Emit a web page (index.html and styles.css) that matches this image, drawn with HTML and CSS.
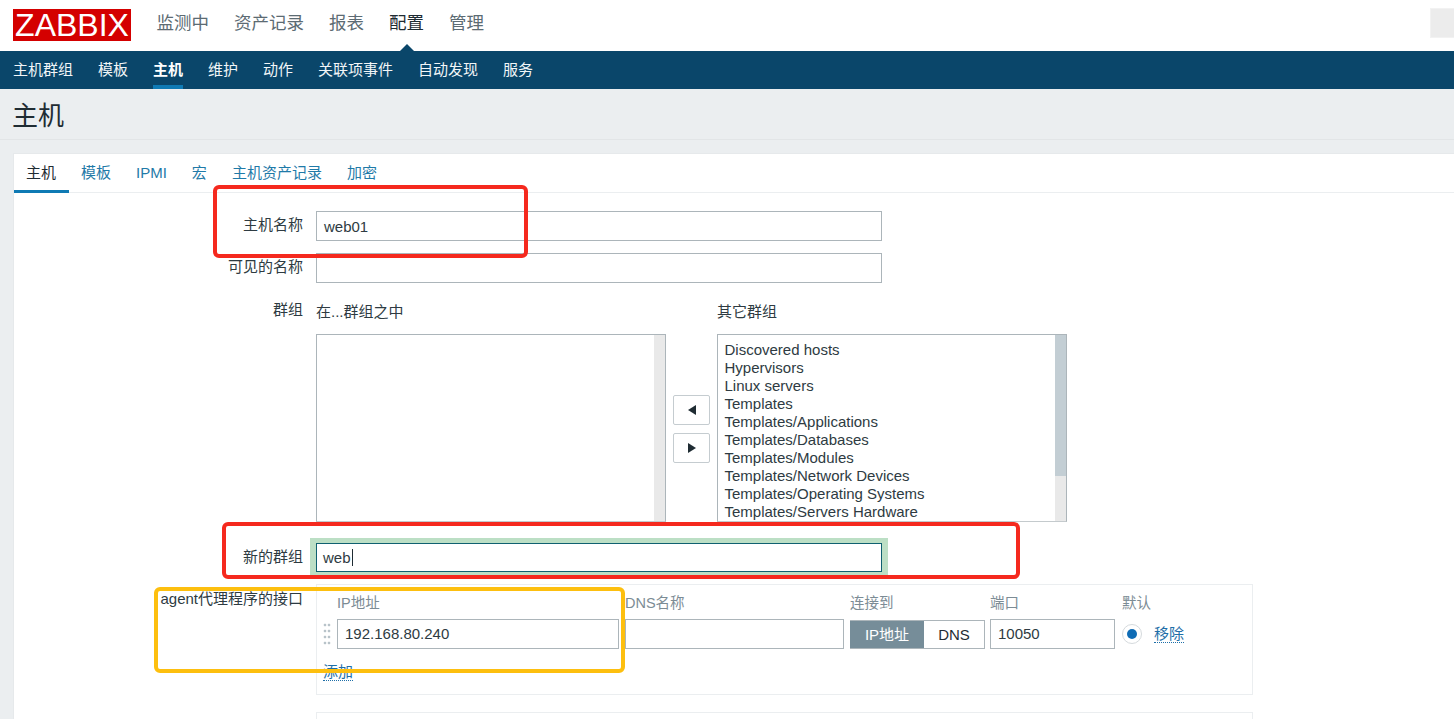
FILE: index.html
```html
<!DOCTYPE html>
<html lang="zh">
<head>
  <meta charset="UTF-8">
  <title>主机 - Zabbix</title>
  <link rel="stylesheet" href="styles.css">
</head>
<body>
  <header class="top-nav">
    <div class="logo">ZABBIX</div>
    <nav class="main-menu">
      <a>监测中</a>
      <a>资产记录</a>
      <a>报表</a>
      <a class="active">配置</a>
      <a>管理</a>
    </nav>
    <div class="top-search"></div>
  </header>

  <nav class="sub-menu">
    <a>主机群组</a>
    <a>模板</a>
    <a class="active">主机</a>
    <a>维护</a>
    <a>动作</a>
    <a>关联项事件</a>
    <a>自动发现</a>
    <a>服务</a>
  </nav>

  <div class="title-bar">
    <h1>主机</h1>
  </div>

  <main class="card">
    <div class="tabs">
      <a class="active">主机</a>
      <a>模板</a>
      <a>IPMI</a>
      <a>宏</a>
      <a>主机资产记录</a>
      <a>加密</a>
    </div>

    <div class="form-row first">
      <label class="row-label">主机名称</label>
      <div class="text-input wide">web01</div>
    </div>

    <div class="form-row">
      <label class="row-label">可见的名称</label>
      <div class="text-input wide"></div>
    </div>

    <div class="form-row groups-row">
      <label class="row-label">群组</label>
      <div class="group-picker">
        <div class="group-col">
          <div class="group-title">在...群组之中</div>
          <div class="list-box">
            <div class="scroll-track"></div>
          </div>
        </div>
        <div class="move-btns">
          <button class="move-btn"><span class="arrow-left"></span></button>
          <button class="move-btn"><span class="arrow-right"></span></button>
        </div>
        <div class="group-col">
          <div class="group-title">其它群组</div>
          <div class="list-box">
            <ul class="group-list">
              <li>Discovered hosts</li>
              <li>Hypervisors</li>
              <li>Linux servers</li>
              <li>Templates</li>
              <li>Templates/Applications</li>
              <li>Templates/Databases</li>
              <li>Templates/Modules</li>
              <li>Templates/Network Devices</li>
              <li>Templates/Operating Systems</li>
              <li>Templates/Servers Hardware</li>
            </ul>
            <div class="scroll-track"><div class="scroll-thumb"></div></div>
          </div>
        </div>
      </div>
    </div>

    <div class="form-row new-group-row">
      <label class="row-label">新的群组</label>
      <div class="new-group-field">
        <div class="text-input focused"><span class="caret">web</span></div>
      </div>
    </div>

    <div class="form-row interface-row">
      <label class="row-label">agent代理程序的接口</label>
      <div class="interface-box">
        <div class="interface-grid">
          <span></span>
          <span class="col-head">IP地址</span>
          <span class="col-head">DNS名称</span>
          <span class="col-head">连接到</span>
          <span class="col-head">端口</span>
          <span class="col-head">默认</span>

          <span class="drag-handle"></span>
          <div class="text-input">192.168.80.240</div>
          <div class="text-input"></div>
          <div class="segmented">
            <span class="seg on">IP地址</span>
            <span class="seg">DNS</span>
          </div>
          <div class="text-input port-input">10050</div>
          <div class="default-cell">
            <span class="radio"></span>
            <a class="dotted-link">移除</a>
          </div>
        </div>
        <a class="dotted-link add-link">添加</a>
      </div>
    </div>

    <div class="form-row next-row">
      <span></span>
      <div class="interface-box"></div>
    </div>
  </main>

  <!-- annotation boxes drawn on top of the screenshot -->
  <div class="mark mark-name"></div>
  <div class="mark mark-group"></div>
  <div class="mark mark-agent"></div>
</body>
</html>
```

FILE: styles.css
```css
* {
  margin: 0;
  padding: 0;
  box-sizing: border-box;
}

html, body {
  height: 719px;
  overflow: hidden;
}

body {
  position: relative;
  font-family: "Liberation Sans", "Noto Sans CJK SC", sans-serif;
  font-size: 15px;
  color: #1f2c33;
  background: #ebeef0;
}

/* top navigation */
.top-nav {
  display: flex;
  align-items: flex-start;
  height: 51px;
  padding-left: 13px;
  background: #ffffff;
}

.logo {
  width: 118px;
  height: 32px;
  margin-top: 9px;
  background: #d40000;
  color: #ffffff;
  font-size: 32px;
  line-height: 32px;
  text-align: center;
}

.main-menu {
  display: flex;
  gap: 25px;
  margin-left: 25.5px;
  margin-top: 12px;
  font-size: 17.5px;
  line-height: 22px;
  color: #5c6b73;
}

.main-menu .active {
  position: relative;
  color: #1f2c33;
}

.main-menu .active::after {
  content: "";
  position: absolute;
  left: 11px;
  top: 32px;
  border-left: 7px solid transparent;
  border-right: 7px solid transparent;
  border-bottom: 7px solid #0a466a;
}

.top-search {
  width: 24px;
  height: 30px;
  margin-top: 8px;
  margin-left: auto;
  background: #ececec;
  border: 1px solid #f2f2f2;
  border-right: none;
}

/* second level menu */
.sub-menu {
  display: flex;
  gap: 25px;
  height: 38px;
  padding-left: 13px;
  background: #0a466a;
  color: #f2f6f8;
  line-height: 37px;
}

.sub-menu .active {
  color: #ffffff;
  font-weight: bold;
  border-bottom: 4px solid #0f7ab4;
}

.title-bar {
  height: 51px;
  padding: 11px 12px 0;
  border-bottom: 1px solid #e2e5e7;
}

.title-bar h1 {
  font-size: 26px;
  font-weight: normal;
  line-height: 32px;
}

/* form card */
.card {
  height: 566px;
  overflow: hidden;
  margin: 13px 0 0 13px;
  background: #ffffff;
  border: 1px solid #e6e9eb;
  border-right: none;
  border-bottom: none;
}

.tabs {
  display: flex;
  height: 39px;
  border-bottom: 1px solid #ebeef0;
  color: #1f7aa8;
  line-height: 38px;
}

.tabs a {
  padding: 0 12.5px;
}

.tabs .active {
  width: 55px;
  height: 39px;
  margin-right: -0.5px;
  padding-left: 12px;
  color: #1f2c33;
  border-bottom: 3px solid #0f7ab4;
}

.form-row {
  display: grid;
  grid-template-columns: 289px 1fr;
  column-gap: 13px;
  margin-top: 12px;
}

.form-row.first {
  margin-top: 18px;
}

.row-label {
  text-align: right;
  line-height: 28px;
  color: #2e3b42;
}

.text-input {
  height: 30px;
  padding: 0 7px;
  border: 1px solid #acb5ba;
  background: #ffffff;
  line-height: 29px;
  color: #2e3b42;
}

.text-input.wide {
  width: 566px;
}

/* group picker */
.groups-row {
  margin-top: 19px;
}

.groups-row .row-label {
  line-height: 16px;
}

.group-picker {
  display: flex;
}

.group-title {
  height: 32px;
  line-height: 20px;
  color: #2e3b42;
}

.list-box {
  display: flex;
  width: 350px;
  height: 188px;
  overflow: hidden;
  border: 1px solid #acb5ba;
  border-bottom-color: #c4cacd;
  background: #ffffff;
}

.group-list {
  list-style: none;
  padding: 6px 0 0 6.5px;
  line-height: 18px;
  color: #2e3b42;
}

.scroll-track {
  width: 11px;
  margin-left: auto;
  background: #e9e9e9;
}

.scroll-thumb {
  height: 141px;
  background: #c3ced4;
}

.move-btns {
  display: flex;
  flex-direction: column;
  gap: 8px;
  width: 51px;
  padding: 93px 0 0 7px;
}

.move-btn {
  display: flex;
  align-items: center;
  justify-content: center;
  width: 37px;
  height: 30px;
  border: 1px solid #c5ccd0;
  border-radius: 2px;
  background: #ffffff;
}

.arrow-left {
  border-top: 5px solid transparent;
  border-bottom: 5px solid transparent;
  border-right: 8px solid #1f2c33;
}

.arrow-right {
  border-top: 5px solid transparent;
  border-bottom: 5px solid transparent;
  border-left: 8px solid #1f2c33;
}

/* new group */
.new-group-row {
  margin-top: 16px;
}

.new-group-row .row-label {
  line-height: 38px;
}

.new-group-field {
  width: 578px;
  height: 38px;
  margin-left: -6px;
  padding: 5px 6px;
  background: #bcdfc5;
}

.text-input.focused {
  height: 29px;
  line-height: 28px;
  padding-left: 6px;
  border-color: #0f6070;
}

.caret {
  padding-right: 1px;
  border-right: 1px solid #1f2c33;
}

/* interfaces */
.interface-row {
  margin-top: 8px;
}

.interface-row .row-label {
  line-height: 30px;
}

.interface-box {
  width: 937px;
  height: 111px;
  padding: 10px 6px 0;
  border: 1px solid #ebeef0;
}

.interface-grid {
  display: grid;
  grid-template-columns: 8px 282px 219px 134px 126px 130px;
  column-gap: 6px;
  row-gap: 8px;
}

.interface-grid .text-input {
  line-height: 27px;
}

.col-head {
  line-height: 16px;
  font-size: 14.5px;
  color: #7c8c95;
}

.text-input.port-input {
  width: 125px;
}

.drag-handle {
  align-self: center;
  width: 8px;
  height: 24px;
  background-image: radial-gradient(circle, #b8c3c9 1.5px, transparent 1.6px);
  background-size: 4px 6px;
}

.segmented {
  display: flex;
  width: 135px;
  height: 29px;
  margin-top: 1px;
  border: 1px solid #acb5ba;
  border-left: none;
  line-height: 28px;
}

.seg {
  flex: 1;
  text-align: center;
}

.seg.on {
  flex: none;
  width: 74px;
  background: #768d99;
  color: #ffffff;
}

.default-cell {
  display: flex;
  align-items: center;
  gap: 12px;
}

.radio {
  display: flex;
  align-items: center;
  justify-content: center;
  width: 20px;
  height: 20px;
  border: 1px solid #d5dadd;
  border-radius: 50%;
}

.radio::after {
  content: "";
  width: 10px;
  height: 10px;
  border-radius: 50%;
  background: #0f6cb5;
}

.dotted-link {
  color: #1f6fa8;
  line-height: 17px;
  border-bottom: 1px dotted #1f6fa8;
}

.add-link {
  display: inline-block;
  margin-top: 14px;
}

.next-row {
  margin-top: 17px;
}

/* hand drawn highlight boxes over the form */
.mark {
  position: absolute;
  border: 4px solid #f5291e;
  border-radius: 6px;
}

.mark-name {
  left: 213px;
  top: 185px;
  width: 315px;
  height: 73px;
}

.mark-group {
  left: 222px;
  top: 522px;
  width: 798px;
  height: 57px;
}

.mark-agent {
  left: 154px;
  top: 587px;
  width: 471px;
  height: 86px;
  border-color: #fdbf0f;
}
```
